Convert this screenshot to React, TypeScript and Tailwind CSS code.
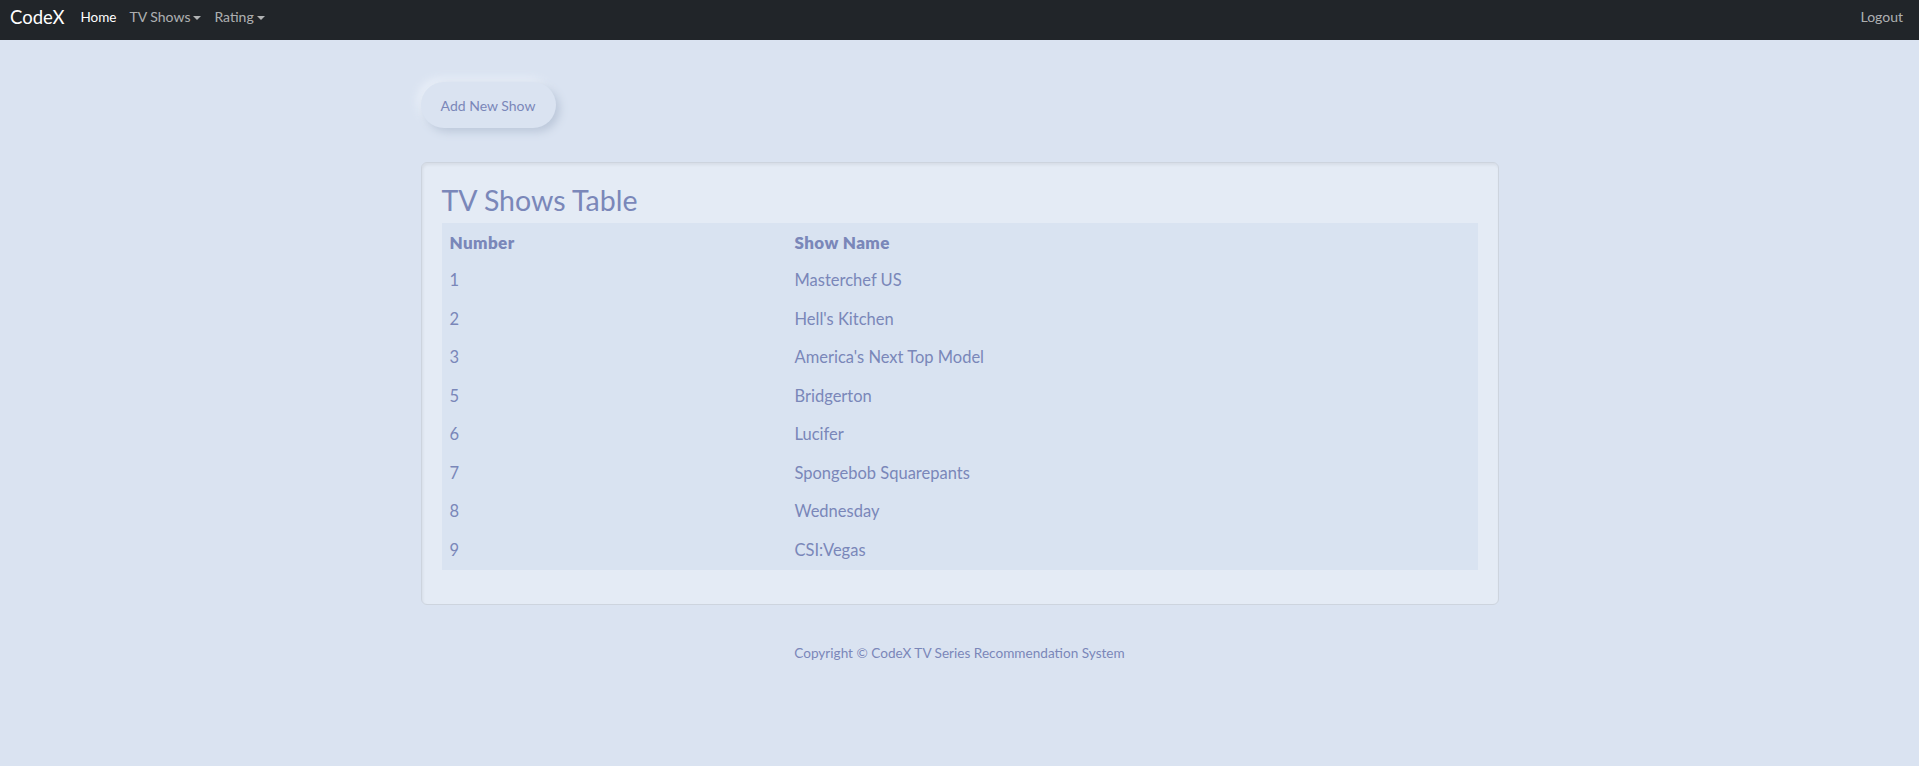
const shows = [
  { id: 1, name: "Masterchef US" },
  { id: 2, name: "Hell's Kitchen" },
  { id: 3, name: "America's Next Top Model" },
  { id: 5, name: "Bridgerton" },
  { id: 6, name: "Lucifer" },
  { id: 7, name: "Spongebob Squarepants" },
  { id: 8, name: "Wednesday" },
  { id: 9, name: "CSI:Vegas" },
];

const Caret = () => (
  <span className="ml-[3px] inline-block h-0 w-0 border-x-[4px] border-t-[4px] border-x-transparent border-t-current align-middle" />
);

const App = () => {
  return (
    <div className="min-h-[766px] bg-[#dae3f1] font-['Lato','Liberation_Sans',sans-serif] text-[#7a87b9]">
      {/* navbar */}
      <nav className="flex h-10 items-start justify-between bg-[#212529] px-[10px]">
        <div className="flex items-center pt-[5px]">
          <a className="mr-[16px] text-[18.5px] leading-[24px] text-white">CodeX</a>
          <ul className="flex items-center gap-[13px] text-[14px] leading-[24px]">
            <li className="text-[13.5px] text-white">Home</li>
            <li className="text-[#ffffffa6]">
              TV Shows
              <Caret />
            </li>
            <li className="text-[#ffffffa6]">
              Rating
              <Caret />
            </li>
          </ul>
        </div>
        <a className="pt-[5px] pr-[6px] text-[14px] leading-[24px] text-[#ffffffa6]">Logout</a>
      </nav>

      <main className="mx-auto w-[1078px] pt-[42px]">
        <button className="h-[46px] w-[135px] rounded-full bg-[#dae3f1] text-[14px] text-[#7a87b9] shadow-[4px_4px_8px_#bcc8da,-4px_-4px_8px_#e9eff8]">
          Add New Show
        </button>

        <div className="mt-[34px] rounded-[6px] border border-[#cdd4de] bg-[#e4ebf5] px-5 pt-5 pb-[34px] shadow-[inset_1px_2px_3px_rgba(0,0,0,0.06)]">
          <h3 className="mb-[6px] text-[28.5px] leading-[34px] text-[#7a87b9]">TV Shows Table</h3>
          <table className="w-full border-collapse bg-[#d9e3f1] text-left text-[16.5px]">
            <thead>
              <tr className="h-[38.5px]">
                <th className="w-[345px] px-2 text-[17px] font-extrabold tracking-[0.4px]">Number</th>
                <th className="px-2 text-[17px] font-extrabold tracking-[0.4px]">Show Name</th>
              </tr>
            </thead>
            <tbody>
              {shows.map((s) => (
                <tr key={s.id} className="h-[38.5px]">
                  <td className="px-2">{s.id}</td>
                  <td className="px-2">{s.name}</td>
                </tr>
              ))}
            </tbody>
          </table>
        </div>

        <footer className="pt-[38px] text-center text-[13.6px] leading-[20px]">
          Copyright © CodeX TV Series Recommendation System
        </footer>
      </main>
    </div>
  );
};

export default App;
